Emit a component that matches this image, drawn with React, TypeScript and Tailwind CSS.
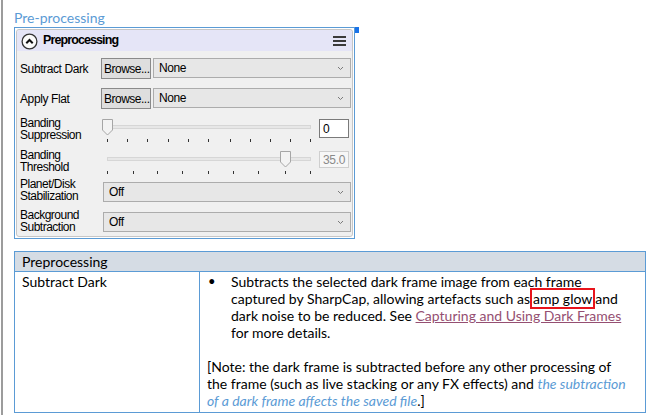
import React from 'react';

const panelFont = { fontFamily: '"Liberation Sans", Arial, sans-serif' };
const docFont = { fontFamily: 'Lato, "Open Sans", sans-serif' };

function Chevron() {
  return (
    <svg width="7" height="5" viewBox="0 0 7 5" className="shrink-0">
      <path d="M1 1 L3.5 3.5 L6 1" fill="none" stroke="#7a7a7a" strokeWidth="1" />
    </svg>
  );
}

function Combo({ value, className }: { value: string; className: string }) {
  return (
    <div className={`flex items-center justify-between border border-[#acacac] bg-[#e7e7e7] pl-[5px] pr-[6px] ${className}`}>
      <span className="text-[12px] tracking-[-0.4px] text-black">{value}</span>
      <Chevron />
    </div>
  );
}

function Browse() {
  return (
    <div className="flex h-[21px] w-[50px] shrink-0 items-center border border-[#8a8a8a] bg-[#dedede] pl-[2px] text-[12px] tracking-[-0.5px] text-black">
      Browse...
    </div>
  );
}

function Slider({ ticks, thumbX, trackY, tickY, height }: { ticks: number[]; thumbX: number; trackY: number; tickY: number; height: number }) {
  const top = trackY - 6;
  return (
    <svg width="214" height={height} viewBox={`0 0 214 ${height}`} className="shrink-0">
      <rect x="7.5" y={trackY + 0.5} width="203" height="3" fill="#e7e7e7" stroke="#d6d6d6" />
      <polygon
        points={`${thumbX + 0.5},${top + 0.5} ${thumbX + 10.5},${top + 0.5} ${thumbX + 10.5},${top + 11} ${thumbX + 5.5},${top + 16} ${thumbX + 0.5},${top + 11}`}
        fill="#f3f3f3"
        stroke="#a6a6a6"
      />
      {ticks.map((t) => (
        <rect key={t} x={t} y={tickY} width="1" height="3" fill="#333" />
      ))}
    </svg>
  );
}

function Label({ lines, className }: { lines: string[]; className?: string }) {
  return (
    <div className={`w-[80px] shrink-0 text-[12px] leading-[11.5px] tracking-[-0.5px] text-black ${className ?? ''}`}>
      {lines.map((l) => (
        <div key={l}>{l}</div>
      ))}
    </div>
  );
}

function Panel() {
  return (
    <div className="relative h-[212px] w-[341px] border border-[#5b9bd5] bg-white p-[1px]">
      <div className="absolute right-[-5px] top-[-1px] h-[6px] w-[4px] bg-[#1a73e8]" />
      <div className="h-[208px] w-[337px] rounded-[3px] border border-[#c6c6c6] bg-[#f0f0f0]" style={panelFont}>
        {/* header */}
        <div className="flex h-[21px] items-center rounded-t-[3px] bg-[#e5e5f7]">
          <svg width="17" height="17" viewBox="0 0 17 17" className="ml-[4px] mt-[1px] shrink-0">
            <circle cx="8.5" cy="8.5" r="7.4" fill="#fbfbfb" stroke="#333" strokeWidth="1.3" />
            <path d="M5.3 10.2 L8.5 7 L11.7 10.2" fill="none" stroke="#111" strokeWidth="2" />
          </svg>
          <span className="ml-[5px] text-[12.5px] font-bold tracking-[-0.9px] text-black">Preprocessing</span>
          <svg width="13" height="10" viewBox="0 0 13 10" className="ml-auto mr-[6px] shrink-0">
            <rect x="0" y="0" width="13" height="2" fill="#3a3a3a" />
            <rect x="0" y="4" width="13" height="2" fill="#3a3a3a" />
            <rect x="0" y="8" width="13" height="2" fill="#3a3a3a" />
          </svg>
        </div>

        <div className="pl-[3px]">
          {/* Subtract Dark */}
          <div className="mt-[7px] flex h-[21px] items-start">
            <div className="w-[81px] shrink-0 self-center text-[12px] tracking-[-0.4px] text-black">Subtract Dark</div>
            <Browse />
            <Combo value="None" className="ml-[2px] h-[20px] w-[198px]" />
          </div>

          {/* Apply Flat */}
          <div className="mt-[9px] flex h-[21px] items-start">
            <div className="w-[81px] shrink-0 self-center text-[12px] tracking-[-0.4px] text-black">Apply Flat</div>
            <Browse />
            <Combo value="None" className="ml-[2px] h-[20px] w-[198px]" />
          </div>

          {/* Banding Suppression */}
          <div className="flex h-[39px] items-start">
            <Label lines={['Banding', 'Suppression']} className="mt-[9px]" />
            <div className="mt-[6px]">
              <Slider ticks={[7, 27, 47, 68, 88, 108, 130, 150, 170, 190, 210]} thumbX={2} trackY={10} tickY={24} height={32} />
            </div>
            <div className="ml-[5px] mt-[10px] flex h-[19px] w-[30px] items-center border border-[#7a7a7a] bg-white pl-[3px] text-[12px] text-black">
              0
            </div>
          </div>

          {/* Banding Threshold */}
          <div className="flex h-[30px] items-start">
            <Label lines={['Banding', 'Threshold']} className="mt-[2px]" />
            <Slider ticks={[7, 33, 57, 82, 108, 133, 158, 185, 210]} thumbX={180} trackY={9} tickY={23} height={30} />
            <div className="ml-[5px] mt-[3px] flex h-[17px] w-[30px] items-center border border-[#cfcfcf] bg-[#f7f7f7] pl-[3px] text-[12px] tracking-[-0.3px] text-[#8a8a8a]">
              35.0
            </div>
          </div>

          {/* Planet/Disk */}
          <div className="flex h-[28px] items-start">
            <Label lines={['Planet/Disk', 'Stabilization']} className="mt-[1px]" />
            <Combo value="Off" className="ml-[3px] mt-[4px] h-[20px] w-[248px]" />
          </div>

          {/* Background */}
          <div className="flex h-[28px] items-start">
            <Label lines={['Background', 'Subtraction']} className="mt-[4px]" />
            <Combo value="Off" className="ml-[3px] mt-[6px] h-[20px] w-[248px]" />
          </div>
        </div>
      </div>
    </div>
  );
}

function DocTable() {
  return (
    <table className="mt-[12px] w-[632px] border-collapse text-[14px] leading-[17px] text-black" style={docFont}>
      <tbody>
        <tr className="h-[20px] bg-[#d5dce4]">
          <td colSpan={2} className="border border-[#5b9bd5] px-[7px] py-0 align-middle">
            Preprocessing
          </td>
        </tr>
        <tr>
          <td className="w-[185px] border border-[#5b9bd5] px-[7px] pb-[3px] pt-[1px] align-top">Subtract Dark</td>
          <td className="border border-[#5b9bd5] pb-[3px] pl-[7px] pt-[1px] align-top">
            <div className="flex">
              <div className="w-[24px] shrink-0 pl-[1px] text-[13px]">•</div>
              <div className="whitespace-nowrap">
                Subtracts the selected dark frame image from each frame
                <br />
                captured by SharpCap, allowing artefacts such as
                <span className="border-2 border-[#e8141c] px-[1px]">amp glow</span>and
                <br />
                dark noise to be reduced. See{' '}
                <span className="text-[#954f72] underline">Capturing and Using Dark Frames</span>
                <br />
                for more details.
              </div>
            </div>
            <div className="h-[17px]" />
            <div className="whitespace-nowrap">
              [Note: the dark frame is subtracted before any other processing of
              <br />
              the frame (such as live stacking or any FX effects) and{' '}
              <span className="italic text-[#5b9bd5]">the subtraction</span>
              <br />
              <span className="italic text-[#5b9bd5]">of a dark frame affects the saved file</span>.]
            </div>
          </td>
        </tr>
      </tbody>
    </table>
  );
}

export default function App() {
  return (
    <div className="flex h-[415px] w-[648px] overflow-hidden bg-white">
      <div className="ml-[1px] h-full w-[2px] shrink-0 bg-[#9c9c9c]" />
      <div className="pl-[11px]">
        <div className="mt-[9px] h-[18px] text-[14px] leading-[17px] text-[#5b9bd5]" style={docFont}>
          Pre-processing
        </div>
        <Panel />
        <DocTable />
      </div>
    </div>
  );
}
